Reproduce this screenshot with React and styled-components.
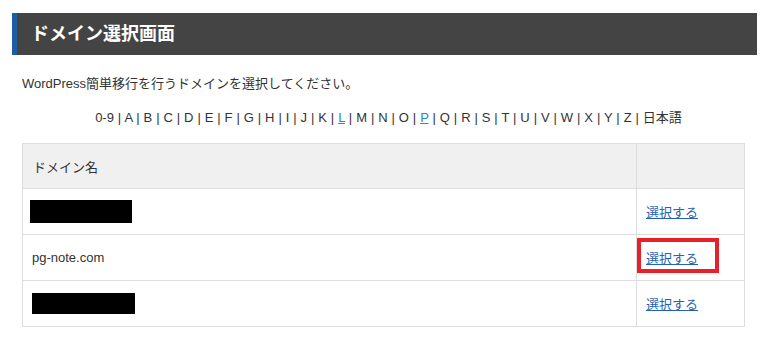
import styled, { createGlobalStyle } from 'styled-components';

const GlobalStyle = createGlobalStyle`
  body {
    margin: 0;
    background: #fff;
    font-family: "Liberation Sans", "Noto Sans CJK JP", sans-serif;
    color: #333;
  }
`;

const Page = styled.div`
  width: 745px;
  padding: 13px 0 0 12px;
`;

const TitleBar = styled.h2`
  margin: 0;
  height: 42px;
  line-height: 42px;
  background: #444;
  border-left: 5px solid #1f5ca6;
  padding-left: 14px;
  color: #fff;
  font-size: 18px;
  font-weight: bold;
`;

const Section = styled.div`
  padding: 0 12px 0 10px;
`;

const Lead = styled.p`
  margin: 19px 0 0;
  font-size: 13px;
  line-height: 20px;
  color: #333;
`;

const Index = styled.p`
  margin: 14px 0 0;
  padding-left: 10px;
  text-align: center;
  font-size: 13px;
  line-height: 20px;
  color: #333;
  word-spacing: 0.3px;
`;

const IndexLink = styled.a`
  color: #2a86d0;
  text-decoration: underline;
`;

const Table = styled.table`
  margin-top: 15px;
  width: 723px;
  border-collapse: collapse;
  font-size: 13px;
  color: #333;
`;

const Th = styled.th`
  height: 44px;
  background: #f0f0f0;
  border: 1px solid #ddd;
  text-align: left;
  font-weight: normal;
  padding: 0 10px;
  width: ${p => (p.$narrow ? '87px' : 'auto')};
`;

const Td = styled.td`
  position: relative;
  height: 45px;
  border: 1px solid #ddd;
  padding: 0 ${p => (p.$pad ?? 9)}px;
`;

const Redacted = styled.span`
  display: block;
  background: #000;
  width: ${p => p.$w}px;
  height: ${p => p.$h}px;
  margin-left: ${p => p.$x}px;
`;

const SelectLink = styled.a`
  color: #1f63b2;
  text-decoration: underline;
  cursor: pointer;
`;

const Highlight = styled.span`
  position: absolute;
  left: 0;
  top: 3px;
  width: 74px;
  height: 27px;
  border: 4px solid #e8202a;
  pointer-events: none;
`;

const letters = 'ABCDEFGHIJKLMNOPQRSTUVWXYZ'.split('');
const linked = ['L', 'P'];

export default function App() {
  return (
    <>
      <GlobalStyle />
      <Page>
        <TitleBar>ドメイン選択画面</TitleBar>
        <Section>
          <Lead>WordPress簡単移行を行うドメインを選択してください。</Lead>
          <Index>
            0-9 |{' '}
            {letters.map(l => (
              <span key={l}>
                {linked.includes(l) ? <IndexLink>{l}</IndexLink> : l} |{' '}
              </span>
            ))}
            日本語
          </Index>
          <Table>
            <thead>
              <tr>
                <Th>ドメイン名</Th>
                <Th $narrow />
              </tr>
            </thead>
            <tbody>
              <tr>
                <Td $pad={0}>
                  <Redacted $w={102} $h={23} $x={7} />
                </Td>
                <Td>
                  <SelectLink>選択する</SelectLink>
                </Td>
              </tr>
              <tr>
                <Td $pad={9}>pg-note.com</Td>
                <Td>
                  <SelectLink>選択する</SelectLink>
                  <Highlight />
                </Td>
              </tr>
              <tr>
                <Td $pad={0}>
                  <Redacted $w={103} $h={21} $x={9} />
                </Td>
                <Td>
                  <SelectLink>選択する</SelectLink>
                </Td>
              </tr>
            </tbody>
          </Table>
        </Section>
      </Page>
    </>
  );
}
